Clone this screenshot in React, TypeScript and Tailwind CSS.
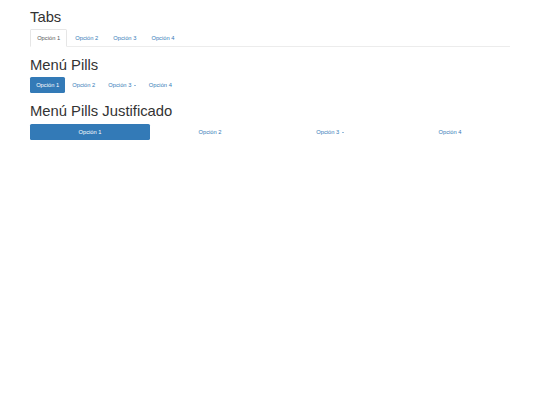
import React from "react";

const options = ["Opción 1", "Opción 2", "Opción 3", "Opción 4"];

function Caret() {
  return (
    <span className="ml-[0.8px] inline-block h-0 w-0 border-x-[1.65px] border-t-[1.65px] border-x-transparent border-t-current align-middle" />
  );
}

function Heading({ children, className }: { children: React.ReactNode; className: string }) {
  return (
    <h1 className={`text-[14.8px] font-normal leading-[16px] text-[#333] ${className}`}>
      {children}
    </h1>
  );
}

function Tabs() {
  return (
    <ul className="flex border-b border-[#ececec]">
      {options.map((label, i) => (
        <li key={label} className="-mb-px mr-[0.8px]">
          <a
            href="#"
            className={
              i === 0
                ? "block rounded-t-[1.6px] border border-[#e6e6e6] border-b-white bg-white px-[6.15px] py-[4.1px] leading-[8.2px] text-[#555]"
                : "block rounded-t-[1.6px] border border-transparent px-[6.15px] py-[4.1px] leading-[8.2px] text-[#337ab7]"
            }
          >
            {label}
          </a>
        </li>
      ))}
    </ul>
  );
}

function Pills() {
  return (
    <ul className="flex gap-[0.8px]">
      {options.map((label, i) => (
        <li key={label}>
          <a
            href="#"
            className={
              i === 0
                ? "block rounded-[1.6px] bg-[#337ab7] px-[6.15px] py-[4.1px] leading-[8.2px] text-white"
                : "block rounded-[1.6px] px-[6.15px] py-[4.1px] leading-[8.2px] text-[#337ab7]"
            }
          >
            {label}
            {i === 2 && (
              <>
                {" "}
                <Caret />
              </>
            )}
          </a>
        </li>
      ))}
    </ul>
  );
}

function JustifiedPills() {
  return (
    <ul className="grid grid-cols-4">
      {options.map((label, i) => (
        <li key={label}>
          <a
            href="#"
            className={
              i === 0
                ? "block rounded-[1.6px] bg-[#337ab7] py-[4.1px] text-center leading-[8.2px] text-white"
                : "block rounded-[1.6px] py-[4.1px] text-center leading-[8.2px] text-[#337ab7]"
            }
          >
            {label}
            {i === 2 && (
              <>
                {" "}
                <Caret />
              </>
            )}
          </a>
        </li>
      ))}
    </ul>
  );
}

export default function App() {
  return (
    <div className="min-h-[405px] w-full bg-white pt-px font-['Liberation_Sans',Arial,sans-serif]">
      <div className="mx-auto w-[480px] text-[5.75px]">
        <Heading className="mb-[4px] mt-[8px]">Tabs</Heading>
        <Tabs />
        <Heading className="mb-[3.5px] mt-[10px]">Menú Pills</Heading>
        <Pills />
        <Heading className="mb-[5px] mt-[9.5px]">Menú Pills Justificado</Heading>
        <JustifiedPills />
      </div>
    </div>
  );
}
